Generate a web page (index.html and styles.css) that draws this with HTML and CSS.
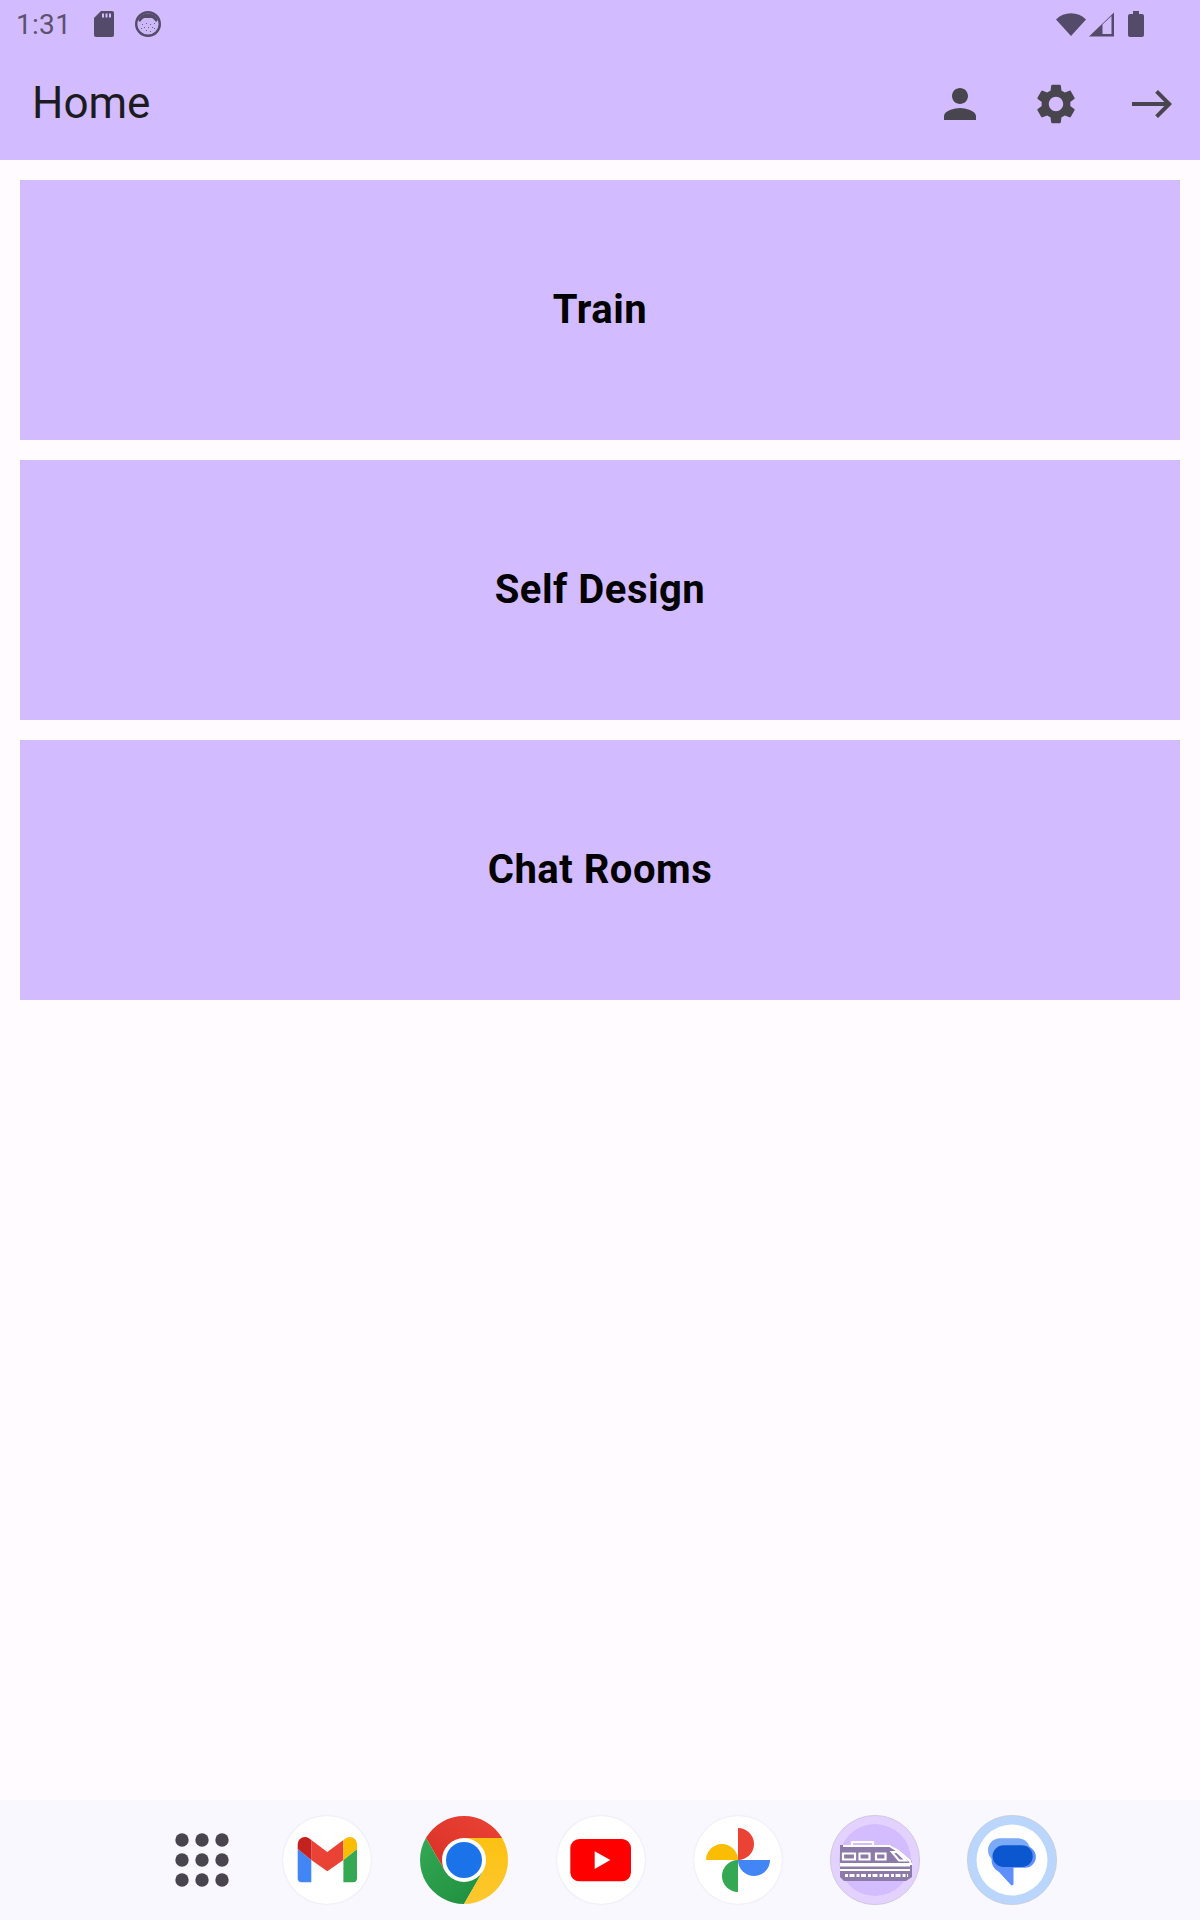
FILE: index.html
```html
<!DOCTYPE html>
<html lang="en">
<head>
    <meta charset="UTF-8">
    <meta name="viewport" content="width=device-width, initial-scale=1.0">
    <title>Home</title>
    <link rel="stylesheet" href="styles.css">
</head>
<body>
    <header class="app-header">
        <div class="status-bar">
            <span class="status-time">1:31</span>
            <svg class="status-sd" width="20" height="26" viewBox="0 0 20 26">
                <path class="status-fill" d="M7 0H18a2 2 0 0 1 2 2V24a2 2 0 0 1-2 2H2a2 2 0 0 1-2-2V7z"/>
                <path class="status-cut" d="M8 2.5h2v4H8zM11.5 2.5h2v4h-2zM15 2.5h2v4h-2z"/>
            </svg>
            <svg class="status-face" width="26" height="26" viewBox="0 0 26 26">
                <circle cx="13" cy="13" r="11.8" fill="#cdb8f7" stroke="#544a69" stroke-width="2.4"/>
                <path class="status-fill" d="M3 9A11 11 0 0 1 23 9L21 11 19 8.5 17 7H9L7 8.5 5 11z"/>
                <path class="status-dots" d="M7 13h1v1H7zM11 12h1v1h-1zM15 13h1v1h-1zM19 12h1v1h-1zM9 16h1v1H9zM13 16h1v1h-1zM17 16h1v1h-1zM6 17h1v1H6zM11 19h1v1h-1zM15 20h1v1h-1zM19 17h1v1h-1z"/>
            </svg>
            <span class="status-spacer"></span>
            <svg width="30" height="26" viewBox="0 0 30 26">
                <path class="status-fill" d="M0 8.5A21 21 0 0 1 30 8.5L15 25z"/>
            </svg>
            <svg class="status-signal" width="26" height="26" viewBox="0 0 26 26">
                <path class="status-fill" d="M0 25.5L25 1.5V25.5z"/>
                <path class="status-cut" d="M13.5 13.5L22.5 5V23H13.5z"/>
            </svg>
            <svg class="status-battery" width="16" height="26" viewBox="0 0 16 26">
                <path class="status-fill" d="M5 0h6v3h3a2 2 0 0 1 2 2V24a2 2 0 0 1-2 2H2a2 2 0 0 1-2-2V5a2 2 0 0 1 2-2h3z"/>
            </svg>
        </div>
        <div class="toolbar">
            <h1 class="toolbar-title">Home</h1>
            <div class="toolbar-actions">
                <span class="icon-btn">
                    <svg width="48" height="48" viewBox="0 0 24 24"><path d="M12 12c2.21 0 4-1.79 4-4s-1.79-4-4-4-4 1.79-4 4 1.79 4 4 4zm0 2c-2.67 0-8 1.34-8 4v2h16v-2c0-2.66-5.33-4-8-4z"/></svg>
                </span>
                <span class="icon-btn">
                    <svg width="48" height="48" viewBox="0 0 24 24"><path d="M19.14 12.94c.04-.3.06-.61.06-.94 0-.32-.02-.64-.07-.94l2.03-1.58c.18-.14.23-.41.12-.61l-1.92-3.32c-.12-.22-.37-.29-.59-.22l-2.39.96c-.5-.38-1.03-.7-1.62-.94l-.36-2.54c-.04-.24-.24-.41-.48-.41h-3.84c-.24 0-.43.17-.47.41l-.36 2.54c-.59.24-1.13.57-1.62.94l-2.39-.96c-.22-.08-.47 0-.59.22L2.74 8.87c-.12.21-.08.47.12.61l2.03 1.58c-.05.3-.09.63-.09.94s.02.64.07.94l-2.03 1.58c-.18.14-.23.41-.12.61l1.92 3.32c.12.22.37.29.59.22l2.39-.96c.5.38 1.03.7 1.62.94l.36 2.54c.05.24.24.41.48.41h3.84c.24 0 .44-.17.47-.41l.36-2.54c.59-.24 1.13-.56 1.62-.94l2.39.96c.22.08.47 0 .59-.22l1.92-3.32c.12-.22.07-.47-.12-.61l-2.01-1.58zM12 15.6c-1.98 0-3.6-1.62-3.6-3.6s1.62-3.6 3.6-3.6 3.6 1.62 3.6 3.6-1.62 3.6-3.6 3.6z"/></svg>
                </span>
                <span class="icon-btn">
                    <svg width="48" height="48" viewBox="0 0 24 24"><path d="M15 5l-1.41 1.41L18.17 11H2v2h16.17l-4.58 4.59L15 19l7-7z"/></svg>
                </span>
            </div>
        </div>
    </header>

    <main class="menu">
        <div class="menu-card">Train</div>
        <div class="menu-card">Self Design</div>
        <div class="menu-card">Chat Rooms</div>
    </main>

    <footer class="dock">
        <div class="dock-apps">
            <svg width="64" height="64" viewBox="0 0 64 64">
                <g fill="#49454f">
                    <circle cx="12" cy="12" r="6.7"/><circle cx="32" cy="12" r="6.7"/><circle cx="52" cy="12" r="6.7"/>
                    <circle cx="12" cy="32" r="6.7"/><circle cx="32" cy="32" r="6.7"/><circle cx="52" cy="32" r="6.7"/>
                    <circle cx="12" cy="52" r="6.7"/><circle cx="32" cy="52" r="6.7"/><circle cx="52" cy="52" r="6.7"/>
                </g>
            </svg>
        </div>
        <div class="dock-icon">
            <svg width="88" height="88" viewBox="0 0 88 88">
                <path fill="#ea4335" d="M28.3 44V24L44.3 36 60.4 24V44L44.3 55.3z"/>
                <path fill="#4285f4" d="M14.7 33V62.3a4 4 0 0 0 4 4H28.3V44z"/>
                <path fill="#34a853" d="M60.4 44V66.3H70a4 4 0 0 0 4-4V33z"/>
                <path fill="#c5221f" d="M14.7 33V28.5C14.7 22 21.5 19 26 22.3L28.3 24V44z"/>
                <path fill="#fbbc04" d="M60.4 24L63 22.3C67.5 19 74 22 74 28.5V33L60.4 44z"/>
            </svg>
        </div>
        <div class="dock-icon dock-icon-plain">
            <svg width="88" height="88" viewBox="0 0 88 88">
                <defs>
                    <linearGradient id="chromeRed" x1="0" y1="1" x2="1" y2="0">
                        <stop offset="0" stop-color="#d93025"/><stop offset="1" stop-color="#ea4335"/>
                    </linearGradient>
                    <linearGradient id="chromeGreen" x1="0" y1="0" x2="1" y2="1">
                        <stop offset="0" stop-color="#34a853"/><stop offset="1" stop-color="#1e8e3e"/>
                    </linearGradient>
                    <linearGradient id="chromeYellow" x1="0" y1="0" x2="0" y2="1">
                        <stop offset="0" stop-color="#fcc111"/><stop offset="1" stop-color="#fdc830"/>
                    </linearGradient>
                </defs>
                <path fill="url(#chromeRed)" d="M5.9 22A44 44 0 0 1 82.1 22H44L25 55z"/>
                <path fill="url(#chromeGreen)" d="M5.9 22A44 44 0 0 0 44 88L63 55H25z"/>
                <path fill="url(#chromeYellow)" d="M82.1 22A44 44 0 0 1 44 88L63 55 44 22z"/>
                <circle cx="44" cy="44" r="22" fill="#fff"/>
                <circle cx="44" cy="44" r="18" fill="#1a73e8"/>
            </svg>
        </div>
        <div class="dock-icon">
            <svg width="88" height="88" viewBox="0 0 88 88">
                <rect x="13.3" y="23" width="60.7" height="42.3" rx="9" fill="#f00"/>
                <path fill="#fff" d="M37.7 35.3L53.3 44 37.7 53z"/>
            </svg>
        </div>
        <div class="dock-icon">
            <svg width="88" height="88" viewBox="0 0 88 88">
                <path fill="#ea4335" d="M44 12A16 16 0 0 1 44 44z"/>
                <path fill="#fbbc04" d="M12 44A16 16 0 0 1 44 44z"/>
                <path fill="#4285f4" d="M76 44A16 16 0 0 1 44 44z"/>
                <path fill="#34a853" d="M44 76A16 16 0 0 1 44 44z"/>
            </svg>
        </div>
        <div class="dock-icon dock-icon-ring">
            <svg width="90" height="90" viewBox="0 0 90 90">
                <circle cx="45" cy="45" r="44.6" fill="#e3d2ff" stroke="#c9c3d2" stroke-width=".8"/>
                <circle cx="45" cy="45" r="36" fill="#d3bdff"/>
                <path fill="#8c7aa9" d="M10 30H61L82 46V62L76 66H14L10 62z"/>
                <g fill="none" stroke="#fff" stroke-width="2.2">
                    <path d="M22 30.5V27H43V30.5"/>
                    <path d="M13 31H60L68 36 80 46 81 49H10"/>
                    <path d="M13 38.5H25V44.5H13zM29.5 38.5H39.5V44.5H29.5zM46 38.5H55.5V44.5H46z"/>
                    <path d="M62 37H67L76 45.5H69z"/>
                    <path d="M10 50.5H80M10 55H80"/>
                    <path d="M15 60.5H78" stroke-width="3" stroke-dasharray="3 1.5 5 2"/>
                </g>
            </svg>
        </div>
        <div class="dock-icon dock-icon-ring">
            <svg width="90" height="90" viewBox="0 0 90 90">
                <circle cx="45" cy="45" r="44.6" fill="#bad6fc" stroke="#c4ccd6" stroke-width=".8"/>
                <circle cx="45" cy="45" r="35.5" fill="#fff"/>
                <rect x="21" y="23.3" width="42" height="24" rx="12" fill="#7baaf7"/>
                <path fill="#5e8ffb" d="M36 31H58A10.8 10.8 0 0 1 58 52.7H46.5V69A1.5 1.5 0 0 1 44 70L32 57A13 13 0 0 1 25 42C25 36 30 31 36 31z"/>
                <rect x="25.7" y="30.3" width="40" height="21.7" rx="10.8" fill="#0b57d0"/>
            </svg>
        </div>
    </footer>
</body>
</html>
```

FILE: styles.css
```css
body {
    margin: 0;
    min-height: 1920px;
    display: flex;
    flex-direction: column;
    font-family: Roboto, "Liberation Sans", sans-serif;
    background-color: #fffbfe;
    color: #1c1b1f;
}

.app-header {
    background-color: #d2bcff;
}

.status-bar {
    height: 48px;
    display: flex;
    align-items: center;
    padding: 0 56px 0 16px;
    color: #5c5270;
}

.status-time {
    font-size: 28px;
    letter-spacing: 0.3px;
}

.status-sd {
    margin-left: 23px;
}

.status-face {
    margin-left: 21px;
}

.status-spacer {
    flex: 1;
}

.status-signal {
    margin-left: 3px;
}

.status-battery {
    margin-left: 13px;
}

.status-fill {
    fill: #544a69;
}

.status-cut {
    fill: #d2bcff;
}

.status-dots {
    fill: #6c5f85;
}

.toolbar {
    height: 112px;
    display: flex;
    align-items: center;
    justify-content: space-between;
    padding-left: 32px;
}

.toolbar-title {
    margin: 0 0 2px;
    font-size: 44px;
    font-weight: 400;
}

.toolbar-actions {
    display: flex;
}

.icon-btn {
    width: 96px;
    height: 96px;
    display: flex;
    align-items: center;
    justify-content: center;
    fill: #49454f;
}

.menu {
    display: flex;
    flex-direction: column;
    gap: 20px;
    padding: 20px;
}

.menu-card {
    height: 260px;
    box-sizing: border-box;
    padding-bottom: 2px;
    display: flex;
    align-items: center;
    justify-content: center;
    background-color: #d2bcff;
    color: #000;
    font-size: 40px;
    font-weight: 700;
    letter-spacing: 0.5px;
}

.dock {
    margin-top: auto;
    height: 120px;
    box-sizing: border-box;
    display: flex;
    align-items: center;
    gap: 49px;
    padding: 0 0 1px 169.5px;
    background-color: #f9f7ff;
}

.dock-apps {
    width: 64px;
    height: 64px;
}

.dock-apps svg,
.dock-icon svg {
    display: block;
}

.dock-icon {
    width: 88px;
    height: 88px;
    border-radius: 50%;
    background-color: #fff;
    box-shadow: 0 0 2px rgba(0, 0, 0, 0.12);
}

.dock-icon-plain {
    background: none;
    box-shadow: none;
}

.dock-icon-ring {
    background: none;
    box-shadow: none;
}

.dock-icon-ring svg {
    margin: -1px;
}
```
